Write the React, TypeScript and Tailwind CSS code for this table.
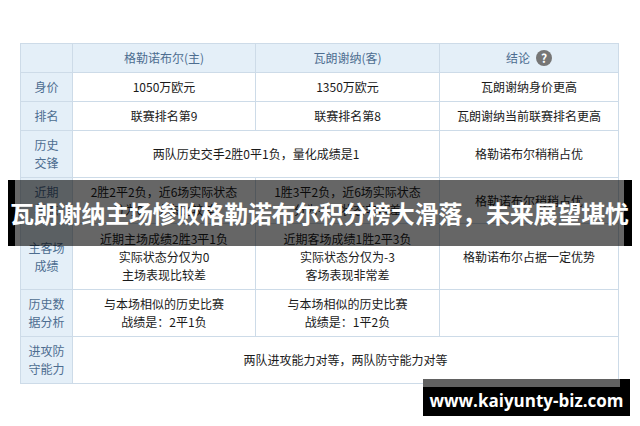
import { ReactNode } from "react";

const font = { fontFamily: '"Noto Sans CJK SC", "Noto Sans", sans-serif' };

function Label({ children }: { children: ReactNode }) {
    return (
        <td className="bg-[#e4eff8] border border-[#cddbe8] text-[#4d6d90] text-center align-middle px-1">
            {children}
        </td>
    );
}

function Cell({ children, span }: { children?: ReactNode; span?: number }) {
    return (
        <td colSpan={span} className="border border-[#cddbe8] text-[#1a1a1a] text-center align-middle px-1">
            {children}
        </td>
    );
}

function Lines({ items }: { items: string[] }) {
    return (
        <>
            {items.map((t, i) => (
                <div key={i}>{t}</div>
            ))}
        </>
    );
}

export default function App() {
    return (
        <div className="relative w-[640px] h-[426px] bg-white overflow-hidden" style={font}>
            <div className="pt-[43px] pl-[20px]">
                <table className="table-fixed border-collapse w-[598px] text-[12px] leading-[18px]">
                    <colgroup>
                        <col className="w-[52px]" />
                        <col className="w-[183px]" />
                        <col className="w-[184px]" />
                        <col className="w-[179px]" />
                    </colgroup>
                    <tbody>
                        <tr className="h-[29px] bg-[#e4eff8] text-[#4d6d90]">
                            <td className="border border-[#cddbe8]"></td>
                            <td className="border border-[#cddbe8] text-center">格勒诺布尔(主)</td>
                            <td className="border border-[#cddbe8] text-center">瓦朗谢纳(客)</td>
                            <td className="border border-[#cddbe8] text-center">
                                <span className="inline-flex items-center gap-[6px]">
                                    结论
                                    <span className="w-[16px] h-[16px] rounded-full bg-[#767676] text-white text-[12px] font-bold leading-[16px] inline-flex items-center justify-center">?</span>
                                </span>
                            </td>
                        </tr>
                        <tr className="h-[29px]">
                            <Label>身价</Label>
                            <Cell>1050万欧元</Cell>
                            <Cell>1350万欧元</Cell>
                            <Cell>瓦朗谢纳身价更高</Cell>
                        </tr>
                        <tr className="h-[29px]">
                            <Label>排名</Label>
                            <Cell>联赛排名第9</Cell>
                            <Cell>联赛排名第8</Cell>
                            <Cell>瓦朗谢纳当前联赛排名更高</Cell>
                        </tr>
                        <tr className="h-[47px]">
                            <Label><Lines items={["历史", "交锋"]} /></Label>
                            <Cell span={2}>两队历史交手2胜0平1负，量化成绩是1</Cell>
                            <Cell>格勒诺布尔稍稍占优</Cell>
                        </tr>
                        <tr className="h-[46px]">
                            <Label><Lines items={["近期", "状态"]} /></Label>
                            <Cell><Lines items={["2胜2平2负，近6场实际状态", "分为0，状态比较差"]} /></Cell>
                            <Cell><Lines items={["1胜3平2负，近6场实际状态", "分为-3，状态非常差"]} /></Cell>
                            <Cell>格勒诺布尔稍稍占优</Cell>
                        </tr>
                        <tr className="h-[66px]">
                            <Label><Lines items={["主客场", "成绩"]} /></Label>
                            <Cell><Lines items={["近期主场成绩2胜3平1负", "实际状态分仅为0", "主场表现比较差"]} /></Cell>
                            <Cell><Lines items={["近期客场成绩1胜2平3负", "实际状态分仅为-3", "客场表现非常差"]} /></Cell>
                            <Cell>格勒诺布尔占据一定优势</Cell>
                        </tr>
                        <tr className="h-[47px]">
                            <Label><Lines items={["历史数", "据分析"]} /></Label>
                            <Cell><Lines items={["与本场相似的历史比赛", "战绩是：2平1负"]} /></Cell>
                            <Cell><Lines items={["与本场相似的历史比赛", "战绩是：1平2负"]} /></Cell>
                            <Cell></Cell>
                        </tr>
                        <tr className="h-[47px]">
                            <Label><Lines items={["进攻防", "守能力"]} /></Label>
                            <Cell span={3}>两队进攻能力对等，两队防守能力对等</Cell>
                        </tr>
                    </tbody>
                </table>
            </div>

            {/* title banner over the table */}
            <div className="absolute left-[8px] top-[180px] w-[624px] h-[66px] flex">
                <div className="w-[7px] bg-black" />
                <div className="flex-1 bg-black/60" />
                <div className="w-[8px] bg-black" />
                <div className="absolute inset-0 flex items-center pl-[2px] text-white font-bold text-[24px] whitespace-nowrap tracking-[-0.2px]">
                    瓦朗谢纳主场惨败格勒诺布尔积分榜大滑落，未来展望堪忧
                </div>
            </div>

            {/* site watermark */}
            <div className="absolute left-[423px] top-[379px] w-[207px] h-[37px] bg-black">
                <div className="h-[8px] w-[197px] bg-[#616161]" />
                <div
                    className="absolute inset-0 pt-[6px] flex items-center justify-center text-white font-bold text-[17px]"
                    style={{ fontFamily: '"Open Sans", "DejaVu Sans", sans-serif' }}
                >
                    www.kaiyunty-biz.com
                </div>
            </div>
        </div>
    );
}
